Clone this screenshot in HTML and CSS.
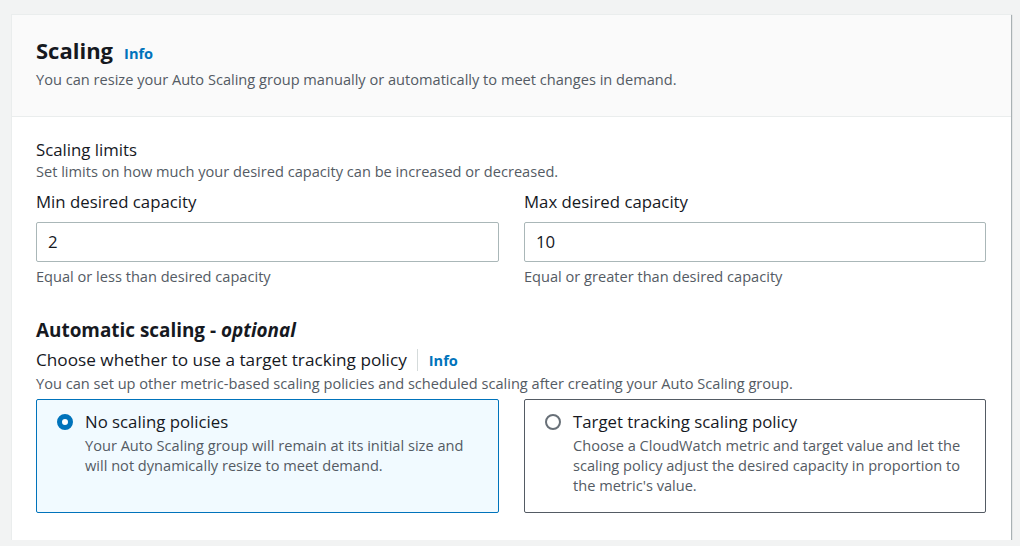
FILE: index.html
```html
<!DOCTYPE html>
<html>
<head>
<meta charset="utf-8">
<link rel="stylesheet" href="styles.css">
</head>
<body>
<div class="card">
  <div class="card-header">
    <h2 class="title">Scaling <a class="info">Info</a></h2>
    <p class="desc">You can resize your Auto Scaling group manually or automatically to meet changes in demand.</p>
  </div>
  <div class="card-body">
    <div class="label">Scaling limits</div>
    <p class="desc">Set limits on how much your desired capacity can be increased or decreased.</p>
    <div class="cols">
      <div class="field">
        <div class="label">Min desired capacity</div>
        <div class="input">2</div>
        <p class="desc hint">Equal or less than desired capacity</p>
      </div>
      <div class="field">
        <div class="label">Max desired capacity</div>
        <div class="input">10</div>
        <p class="desc hint">Equal or greater than desired capacity</p>
      </div>
    </div>
    <h3 class="subhead">Automatic scaling - <i>optional</i></h3>
    <div class="label choose"><span>Choose whether to use a target tracking policy</span><span class="divider"></span><a class="info">Info</a></div>
    <p class="desc">You can set up other metric-based scaling policies and scheduled scaling after creating your Auto Scaling group.</p>
    <div class="cols tiles">
      <div class="tile selected">
        <span class="radio on"></span>
        <div class="tile-text">
          <div class="label">No scaling policies</div>
          <p class="desc">Your Auto Scaling group will remain at its initial size and will not dynamically resize to meet demand.</p>
        </div>
      </div>
      <div class="tile">
        <span class="radio"></span>
        <div class="tile-text">
          <div class="label">Target tracking scaling policy</div>
          <p class="desc">Choose a CloudWatch metric and target value and let the scaling policy adjust the desired capacity in proportion to the metric's value.</p>
        </div>
      </div>
    </div>
  </div>
</div>
</body>
</html>
```
FILE: styles.css
```css
* { box-sizing: border-box; }
body {
  margin: 0;
  background: #f2f3f3;
  font-family: "Open Sans", "Noto Sans", sans-serif;
  color: #16191f;
}
.card {
  margin: 14px 0 0 11px;
  width: 1000px;
  background: #fff;
  border-left: 1px solid #eaeded;
  border-top: 1px solid #eaeded;
  box-shadow: 1px 1px 1px 0 rgba(0,28,36,0.3);
}
.card-header {
  background: #fafafa;
  border-bottom: 1px solid #eaeded;
  padding: 21px 25px 27px 24px;
}
.title {
  margin: 0;
  font-size: 22px;
  line-height: 28px;
  font-weight: 700;
  display: flex;
  align-items: baseline;
  gap: 11px;
}
.info {
  color: #0073bb;
  font-size: 14.6px;
  font-weight: 700;
}
.desc {
  margin: 0;
  font-size: 14.6px;
  line-height: 20px;
  color: #545b64;
}
.card-header .desc { margin-top: 2px; }
.card-body {
  padding: 22px 25px 27px 24px;
}
.label {
  font-size: 16.8px;
  line-height: 22px;
  color: #16191f;
}
.cols {
  display: grid;
  grid-template-columns: 463px 462px;
  gap: 25px;
  margin-top: 10px;
}
.input {
  margin-top: 9px;
  height: 40px;
  border: 1px solid #aab7b8;
  border-radius: 2px;
  padding: 0 11px;
  font-size: 16.8px;
  line-height: 38px;
}
.hint { margin-top: 4px; }
.subhead {
  margin: 32px 0 0;
  font-size: 18.9px;
  line-height: 24px;
  font-weight: 700;
}
.subhead i { font-weight: 700; }
.choose {
  margin-top: 7px;
  display: flex;
  align-items: center;
}
.choose > span:first-child { font-size: 17.2px; }
.divider {
  width: 1px;
  height: 22px;
  background: #d5dbdb;
  margin: 0 11px 0 10px;
}
.choose + .desc { margin-top: 2px; }
.tiles { margin-top: 6px; }
.tile {
  border: 1px solid #545b64;
  border-radius: 2px;
  height: 114px;
  padding: 11px 20px 0 20px;
  display: flex;
  gap: 12px;
}
.tile.selected {
  border-color: #0073bb;
  background: #f1faff;
}
.radio {
  flex: none;
  width: 16px;
  height: 16px;
  margin-top: 3px;
  border-radius: 50%;
  border: 2px solid #687078;
  background: #fff;
}
.radio.on {
  border: 5px solid #0073bb;
}
.tile-text .desc { margin-top: 2px; }
```
